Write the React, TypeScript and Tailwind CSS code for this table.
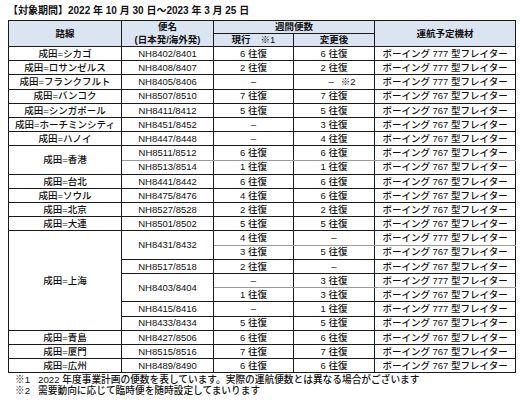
import React from 'react'

type Row = {
  route?: string
  routeSpan?: number
  flight?: string
  flightSpan?: number
  current: string
  after: string
  note?: string
  plane: '777' | '767'
  // true when the next row is a sub-row of the same flight (thin grey rule)
  subNext?: boolean
}

const rows: Row[] = [
  { route: '成田=シカゴ', flight: 'NH8402/8401', current: '6 往復', after: '6 往復', plane: '777' },
  { route: '成田=ロサンゼルス', flight: 'NH8408/8407', current: '2 往復', after: '2 往復', plane: '777' },
  { route: '成田=フランクフルト', flight: 'NH8405/8406', current: '–', after: '–', note: '※2', plane: '777' },
  { route: '成田=バンコク', flight: 'NH8507/8510', current: '7 往復', after: '7 往復', plane: '767' },
  { route: '成田=シンガポール', flight: 'NH8411/8412', current: '5 往復', after: '5 往復', plane: '767' },
  { route: '成田=ホーチミンシティ', flight: 'NH8451/8452', current: '–', after: '3 往復', plane: '767' },
  { route: '成田=ハノイ', flight: 'NH8447/8448', current: '–', after: '4 往復', plane: '767' },
  { route: '成田=香港', routeSpan: 2, flight: 'NH8511/8512', current: '6 往復', after: '6 往復', plane: '767', subNext: true },
  { flight: 'NH8513/8514', current: '1 往復', after: '1 往復', plane: '767' },
  { route: '成田=台北', flight: 'NH8441/8442', current: '6 往復', after: '6 往復', plane: '767' },
  { route: '成田=ソウル', flight: 'NH8475/8476', current: '4 往復', after: '6 往復', plane: '767' },
  { route: '成田=北京', flight: 'NH8527/8528', current: '2 往復', after: '2 往復', plane: '767' },
  { route: '成田=大連', flight: 'NH8501/8502', current: '5 往復', after: '5 往復', plane: '767' },
  { route: '成田=上海', routeSpan: 7, flight: 'NH8431/8432', flightSpan: 2, current: '4 往復', after: '–', plane: '777', subNext: true },
  { current: '3 往復', after: '5 往復', plane: '767' },
  { flight: 'NH8517/8518', current: '2 往復', after: '–', plane: '767' },
  { flight: 'NH8403/8404', flightSpan: 2, current: '–', after: '3 往復', plane: '777', subNext: true },
  { current: '1 往復', after: '3 往復', plane: '767' },
  { flight: 'NH8415/8416', current: '–', after: '1 往復', plane: '777' },
  { flight: 'NH8433/8434', current: '5 往復', after: '5 往復', plane: '767' },
  { route: '成田=青島', flight: 'NH8427/8506', current: '6 往復', after: '6 往復', plane: '767' },
  { route: '成田=厦門', flight: 'NH8515/8516', current: '7 往復', after: '7 往復', plane: '767' },
  { route: '成田=広州', flight: 'NH8489/8490', current: '6 往復', after: '6 往復', plane: '767' },
]

const cell = 'border border-[#1a1a1a] p-0 text-center align-middle whitespace-nowrap'
const head = 'border border-[#1a1a1a] p-0 text-center align-middle bg-[#dbe5f1] whitespace-nowrap font-semibold'

export default function App() {
  return (
    <div
      className="w-[520px] h-[406px] bg-white text-[#111] overflow-hidden"
      style={{ fontFamily: '"Liberation Sans", "Noto Sans CJK JP", sans-serif' }}
    >
      <div className="pl-[8px] pt-[4px] h-[20px] text-[10px] leading-[14px] font-semibold">
        【対象期間】2022 年 10 月 30 日～2023 年 3 月 25 日
      </div>

      <table className="ml-[8px] w-[507px] table-fixed border-collapse text-[9.5px] leading-none">
        <colgroup>
          <col className="w-[113px]" />
          <col className="w-[92px]" />
          <col className="w-[80px]" />
          <col className="w-[81px]" />
          <col className="w-[141px]" />
        </colgroup>
        <thead>
          <tr className="h-[13px]">
            <th rowSpan={2} className={head}>路線</th>
            <th rowSpan={2} className={head + ' leading-[12.5px]'}>
              便名
              <br />
              (日本発/海外発)
            </th>
            <th colSpan={2} className={head}>週間便数</th>
            <th rowSpan={2} className={head}>運航予定機材</th>
          </tr>
          <tr className="h-[13px]">
            <th className={head}>
              現行<span className="ml-[10px] font-normal">※1</span>
            </th>
            <th className={head}>変更後</th>
          </tr>
        </thead>
        <tbody className="font-medium">
          {rows.map((r, i) => {
            const sub = r.subNext ? ' border-b-[#9a9a9a]' : ''
            return (
              <tr key={i} className="h-[14.2px]">
                {r.route && (
                  <td rowSpan={r.routeSpan} className={cell}>
                    {r.route}
                  </td>
                )}
                {r.flight && (
                  <td rowSpan={r.flightSpan} className={cell + (r.flightSpan ? '' : sub)}>
                    {r.flight}
                  </td>
                )}
                <td className={cell + sub}>{r.current}</td>
                <td className={cell + sub + (r.note ? ' pl-[16px]' : '')}>
                  {r.note ? (
                    <>
                      –<span className="ml-[7px] font-normal">{r.note}</span>
                    </>
                  ) : (
                    r.after
                  )}
                </td>
                <td className={cell + sub}>ボーイング {r.plane} 型フレイター</td>
              </tr>
            )
          })}
        </tbody>
      </table>

      <div className="pl-[15px] pt-[2px] text-[9.7px] leading-[10.5px] font-medium">
        <div>
          ※1<span className="ml-[8px]">2022 年度事業計画の便数を表しています。実際の運航便数とは異なる場合がございます</span>
        </div>
        <div>
          ※2<span className="ml-[8px]">需要動向に応じて臨時便を随時設定してまいります</span>
        </div>
      </div>
    </div>
  )
}
